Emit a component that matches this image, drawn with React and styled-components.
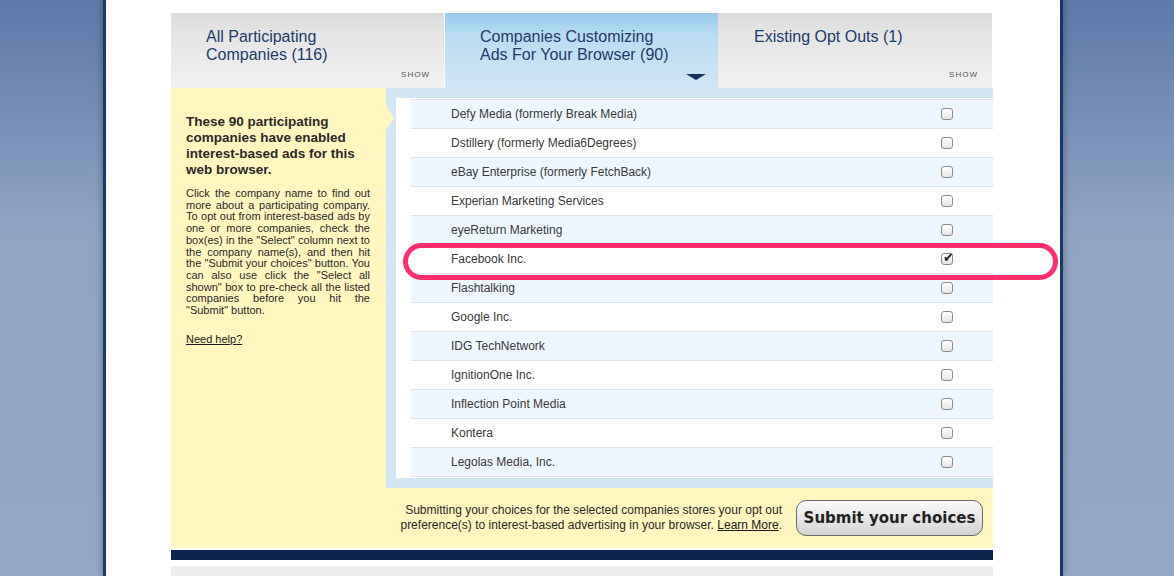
import React from 'react';
import styled, { createGlobalStyle } from 'styled-components';

const Global = createGlobalStyle`
  html, body { margin: 0; height: 100%; }
  body {
    background: linear-gradient(#5c79a9, #8fa5c4 40%, #94a8c5);
    font-family: "Liberation Sans", Arial, sans-serif;
  }
`;

const Page = styled.div`
  width: 960px;
  margin: 0 0 0 103px;
  height: 576px;
  background: #fff;
  border-left: 3px solid #16396b;
  border-right: 3px solid #16396b;
  box-shadow: 0 0 8px rgba(0,0,0,0.35);
  padding: 13px 0 0 65px;
  box-sizing: border-box;
  overflow: hidden;
`;

const Content = styled.div`
  width: 822px;
  position: relative;
`;

const Tabs = styled.div`
  display: grid;
  grid-template-columns: 274px 273px 275px;
  height: 75px;
`;

const Tab = styled.div`
  position: relative;
  background: ${p => p.active
    ? 'linear-gradient(#98cbeb, #b9dcf2 30%, #cfe6f5)'
    : 'linear-gradient(#dcdcdc, #e4e4e4 25%, #f1f1f1)'};
  margin-right: ${p => p.active ? 0 : 1}px;
  padding: 15px 0 0 ${p => p.pad}px;
  color: #1c3b6a;
  font-size: 16px;
  line-height: 18px;
`;

const Show = styled.span`
  position: absolute;
  right: 14px;
  bottom: 4px;
  font-size: 8px;
  letter-spacing: 1px;
  color: #555;
`;

const DownArrow = styled.span`
  position: absolute;
  left: 241px;
  bottom: 8px;
  border-left: 10px solid transparent;
  border-right: 10px solid transparent;
  border-top: 6px solid #12305c;
`;

const Panel = styled.div`
  display: grid;
  grid-template-columns: 215px 1fr;
  background: #fff7bd;
`;

const Side = styled.div`
  position: relative;
  box-sizing: border-box;
  padding: 26px 16px 0 15px;
  height: 400px;
  color: #2a2a2a;
  &::after {
    content: '';
    position: absolute;
    right: -8px;
    top: 18px;
    border-top: 12px solid transparent;
    border-bottom: 12px solid transparent;
    border-left: 8px solid #fff7bd;
  }
`;

const SideTitle = styled.div`
  font-weight: bold;
  font-size: 13.5px;
  line-height: 16px;
  margin-bottom: 10px;
`;

const SideText = styled.p`
  margin: 0 0 12px;
  font-size: 11px;
  line-height: 11.7px;
  text-align: justify;
`;

const HelpLink = styled.a`
  font-size: 11px;
  color: #1a1a1a;
  text-decoration: underline;
`;

const ListArea = styled.div`
  background: #d2e6f3;
  padding: 10px 0 10px 10px;
  height: 380px;
`;

const List = styled.div`
  background: #fff;
  height: 380px;
  padding: 1px 0 0 15px;
  box-sizing: border-box;
  overflow: hidden;
`;

const Row = styled.div`
  display: flex;
  align-items: center;
  justify-content: space-between;
  height: 28px;
  border-bottom: 1px solid #dde4ea;
  border-top: ${p => p.first ? '1px solid #dde4ea' : '0'};
  background: ${p => p.alt ? '#eef6fd' : '#fff'};
  padding: 0 40px 0 40px;
  font-size: 12px;
  color: #3a3a3a;
`;

const Box = styled.span`
  width: 10px;
  height: 10px;
  border: 1px solid #8c8c8c;
  border-radius: 3px;
  background: linear-gradient(#fff, #e4e4e4);
  font-size: 13px;
  line-height: 8px;
  color: #222;
  text-indent: 1px;
`;

const Footer = styled.div`
  grid-column: 1 / 3;
  display: flex;
  justify-content: flex-end;
  align-items: center;
  gap: 14px;
  height: 60px;
  padding-right: 10px;
  font-size: 12px;
  line-height: 15px;
  color: #2a2a2a;
  text-align: right;
  a { color: #1a1a1a; }
`;

const Submit = styled.button`
  width: 187px;
  height: 36px;
  white-space: nowrap;
  border: 1px solid #6a6a6a;
  border-radius: 10px;
  background: linear-gradient(#fafafa, #d4d4d4);
  font-family: "DejaVu Sans", sans-serif;
  font-weight: bold;
  font-size: 15px;
  color: #222;
  padding: 0;
`;

const NavyBar = styled.div`
  height: 10px;
  background: #0c254d;
  margin-top: 2px;
`;

const GrayBar = styled.div`
  height: 20px;
  background: #eeeeee;
  margin-top: 6px;
`;

const Highlight = styled.div`
  position: absolute;
  left: 232px;
  top: 230px;
  width: 645px;
  height: 27px;
  border: 5px solid #ff2d6e;
  border-radius: 19px;
`;

const companies = [
  'Defy Media (formerly Break Media)',
  'Dstillery (formerly Media6Degrees)',
  'eBay Enterprise (formerly FetchBack)',
  'Experian Marketing Services',
  'eyeReturn Marketing',
  'Facebook Inc.',
  'Flashtalking',
  'Google Inc.',
  'IDG TechNetwork',
  'IgnitionOne Inc.',
  'Inflection Point Media',
  'Kontera',
  'Legolas Media, Inc.',
];

export default function App() {
  return (
    <>
      <Global />
      <Page>
        <Content>
          <Tabs>
            <Tab pad={35}>All Participating<br />Companies (116)<Show>SHOW</Show></Tab>
            <Tab active pad={35}>Companies Customizing<br />Ads For Your Browser (90)<DownArrow /></Tab>
            <Tab pad={36}>Existing Opt Outs (1)<Show>SHOW</Show></Tab>
          </Tabs>
          <Panel>
            <Side>
              <SideTitle>These 90 participating companies have enabled interest-based ads for this web browser.</SideTitle>
              <SideText>Click the company name to find out more about a participating company. To opt out from interest-based ads by one or more companies, check the box(es) in the "Select" column next to the company name(s), and then hit the "Submit your choices" button. You can also use click the "Select all shown" box to pre-check all the listed companies before you hit the "Submit" button.</SideText>
              <HelpLink href="#">Need help?</HelpLink>
            </Side>
            <ListArea>
              <List>
                {companies.map((c, i) => (
                  <Row key={c} alt={i % 2 === 0} first={i === 0}>
                    {c}
                    <Box>{c === 'Facebook Inc.' ? '✔' : ''}</Box>
                  </Row>
                ))}
              </List>
            </ListArea>
            <Footer>
              <div>
                Submitting your choices for the selected companies stores your opt out<br />
                preference(s) to interest-based advertising in your browser. <a href="#">Learn More</a>.
              </div>
              <Submit>Submit your choices</Submit>
            </Footer>
          </Panel>
          <NavyBar />
          <GrayBar />
          <Highlight />
        </Content>
      </Page>
    </>
  );
}
